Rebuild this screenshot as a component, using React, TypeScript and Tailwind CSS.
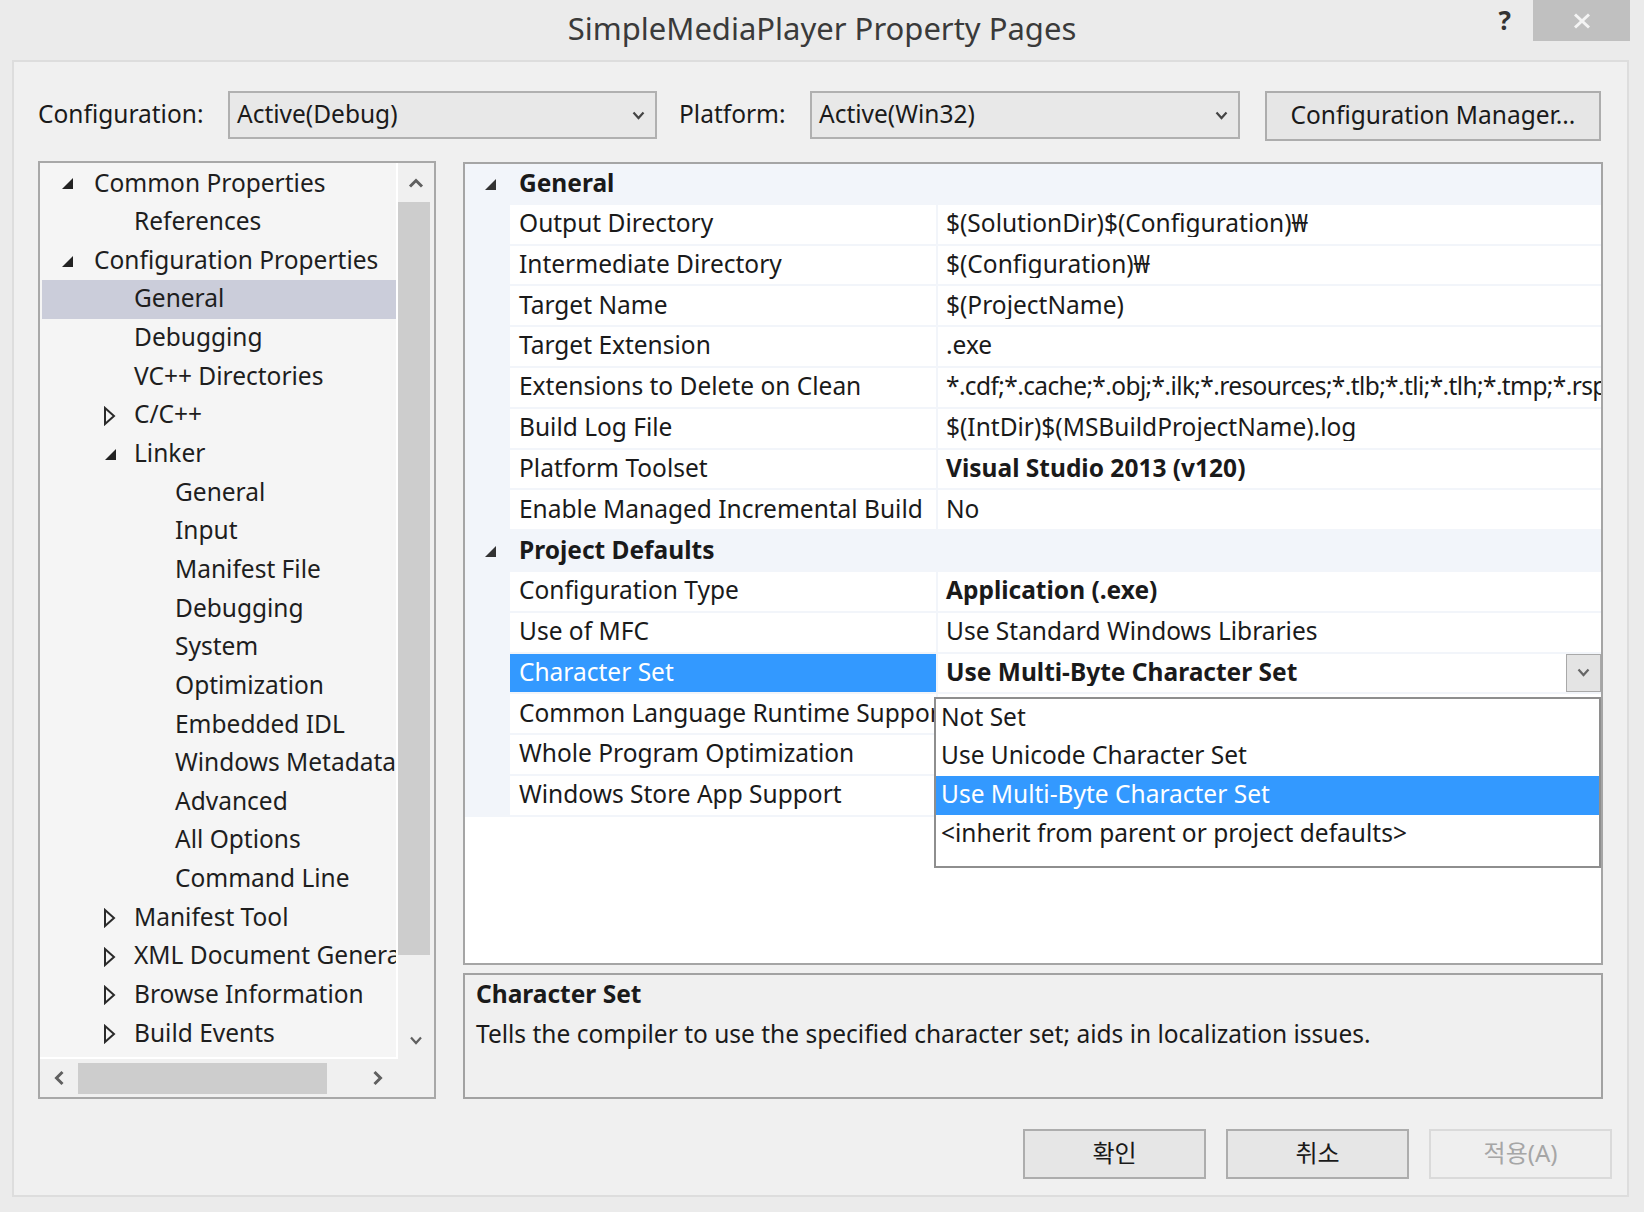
import React from "react";

const F = "font-['Noto_Sans','Noto_Sans_CJK_KR',sans-serif]";

function ExpTri({ c = "#222" }: { c?: string }) {
  return (
    <svg width="14" height="13" viewBox="0 0 14 13">
      <polygon points="13,1 13,12 2,12" fill={c} />
    </svg>
  );
}
function ColTri() {
  return (
    <svg width="13" height="20" viewBox="0 0 13 20">
      <polygon points="2,2 11,10 2,18" fill="none" stroke="#2a2a2a" strokeWidth="2" strokeLinejoin="miter" />
    </svg>
  );
}
function ChevDown({ c = "#555", w = 13 }: { c?: string; w?: number }) {
  return (
    <svg width={w} height="9" viewBox="0 0 13 9">
      <polyline points="1.5,1.5 6.5,7 11.5,1.5" fill="none" stroke={c} strokeWidth="2.2" />
    </svg>
  );
}
function ChevUp() {
  return (
    <svg width="16" height="10" viewBox="0 0 16 10">
      <polyline points="2,8.5 8,2.5 14,8.5" fill="none" stroke="#606060" strokeWidth="3" />
    </svg>
  );
}
function ChevLeft() {
  return (
    <svg width="10" height="16" viewBox="0 0 10 16">
      <polyline points="8.5,2 2.5,8 8.5,14" fill="none" stroke="#606060" strokeWidth="3" />
    </svg>
  );
}
function ChevRight() {
  return (
    <svg width="10" height="16" viewBox="0 0 10 16">
      <polyline points="1.5,2 7.5,8 1.5,14" fill="none" stroke="#606060" strokeWidth="3" />
    </svg>
  );
}

type TreeItem = { t: string; l: 0 | 1 | 2; tri?: "e" | "c"; sel?: boolean };
const tree: TreeItem[] = [
  { t: "Common Properties", l: 0, tri: "e" },
  { t: "References", l: 1 },
  { t: "Configuration Properties", l: 0, tri: "e" },
  { t: "General", l: 1, sel: true },
  { t: "Debugging", l: 1 },
  { t: "VC++ Directories", l: 1 },
  { t: "C/C++", l: 1, tri: "c" },
  { t: "Linker", l: 1, tri: "e" },
  { t: "General", l: 2 },
  { t: "Input", l: 2 },
  { t: "Manifest File", l: 2 },
  { t: "Debugging", l: 2 },
  { t: "System", l: 2 },
  { t: "Optimization", l: 2 },
  { t: "Embedded IDL", l: 2 },
  { t: "Windows Metadata", l: 2 },
  { t: "Advanced", l: 2 },
  { t: "All Options", l: 2 },
  { t: "Command Line", l: 2 },
  { t: "Manifest Tool", l: 1, tri: "c" },
  { t: "XML Document Generator", l: 1, tri: "c" },
  { t: "Browse Information", l: 1, tri: "c" },
  { t: "Build Events", l: 1, tri: "c" },
];

function TreeRow({ it }: { it: TreeItem }) {
  const lead =
    it.l === 0 ? "w-[52px] pl-[18px]" : it.l === 1 ? "w-[92px] pl-[61px]" : "w-[133px] pl-[62px]";
  return (
    <div
      className={`h-[38.65px] flex items-center whitespace-nowrap ${
        it.sel ? "bg-[#cbcdda]" : ""
      }`}
    >
      <div className={`${lead} shrink-0 flex items-center`}>
        {it.tri === "e" ? <ExpTri /> : it.tri === "c" ? <ColTri /> : null}
      </div>
      <span className="text-[24.5px] leading-none text-[#1e1e1e] pb-[2px]">{it.t}</span>
    </div>
  );
}

type Row =
  | { h: string }
  | { n: string; v: string; b?: boolean; sel?: boolean; tight?: boolean };

const rows: Row[] = [
  { h: "General" },
  { n: "Output Directory", v: "$(SolutionDir)$(Configuration)\u20A9" },
  { n: "Intermediate Directory", v: "$(Configuration)\u20A9" },
  { n: "Target Name", v: "$(ProjectName)" },
  { n: "Target Extension", v: ".exe" },
  {
    n: "Extensions to Delete on Clean",
    v: "*.cdf;*.cache;*.obj;*.ilk;*.resources;*.tlb;*.tli;*.tlh;*.tmp;*.rsp;*.pgc;*.pgd;*.meta;*.tlog;*.manifest;*.res;*.pch;*.exp",
    tight: true,
  },
  { n: "Build Log File", v: "$(IntDir)$(MSBuildProjectName).log" },
  { n: "Platform Toolset", v: "Visual Studio 2013 (v120)", b: true },
  { n: "Enable Managed Incremental Build", v: "No" },
  { h: "Project Defaults" },
  { n: "Configuration Type", v: "Application (.exe)", b: true },
  { n: "Use of MFC", v: "Use Standard Windows Libraries" },
  { n: "Character Set", v: "Use Multi-Byte Character Set", b: true, sel: true },
  { n: "Common Language Runtime Support", v: "" },
  { n: "Whole Program Optimization", v: "" },
  { n: "Windows Store App Support", v: "" },
];

function Dropdown() {
  const items = [
    "Not Set",
    "Use Unicode Character Set",
    "Use Multi-Byte Character Set",
    "<inherit from parent or project defaults>",
  ];
  return (
    <div className="absolute left-[469px] top-[43px] w-[667px] h-[171px] z-10 bg-white border-2 border-[#8e8e8e] flex flex-col">
      {items.map((t, i) => (
        <div
          key={i}
          className={`h-[38.7px] flex items-center pl-[5px] text-[24.5px] leading-none whitespace-nowrap ${
            i === 2 ? "bg-[#3399ff] text-white" : "text-[#1a1a1a]"
          }`}
        >
          <span className="pb-[2px]">{t}</span>
        </div>
      ))}
    </div>
  );
}

function GridRow({ r }: { r: Row }) {
  if ("h" in r) {
    return (
      <div className="h-[40.8px] bg-[#f2f5fa] flex items-center">
        <div className="w-[54px] pl-[18px] shrink-0 flex items-center">
          <ExpTri c="#333" />
        </div>
        <span className="text-[24.5px] leading-none font-bold text-[#1a1a1a] pb-[2px]">{r.h}</span>
      </div>
    );
  }
  return (
    <div className="h-[40.8px] bg-[#f2f5fa] flex pb-[2px] relative">
      <div className="w-[45px] shrink-0" />
      <div
        className={`w-[426px] shrink-0 flex items-center pl-[9px] overflow-hidden whitespace-nowrap ${
          r.sel ? "bg-[#3399ff] text-white" : "bg-white text-[#1a1a1a]"
        }`}
      >
        <span className="text-[24.5px] leading-none pb-[2px]">{r.n}</span>
      </div>
      <div className="w-[2px] shrink-0" />
      <div className="flex-1 min-w-0 bg-white flex items-center overflow-hidden whitespace-nowrap">
        <span
          className={`flex-1 min-w-0 pl-[8px] text-[24.5px] leading-none text-[#1a1a1a] pb-[2px] overflow-hidden ${
            r.b ? "font-bold" : ""
          } ${r.tight ? "tracking-[-0.6px]" : ""}`}
        >
          {r.v}
        </span>
        {r.sel && (
          <div className="w-[35px] h-full shrink-0 border border-[#a9a9a9] bg-[#e4e4e4] flex items-center justify-center">
            <ChevDown c="#666" w={13} />
          </div>
        )}
      </div>
      {r.sel && <Dropdown />}
    </div>
  );
}

function Combo({ text, w }: { text: string; w: string }) {
  return (
    <div
      className={`${w} h-[48px] shrink-0 border-2 border-[#b0b0b0] bg-[#e8e8e8] flex items-center pl-[7px] pr-[10px]`}
    >
      <span className="flex-1 text-[24.5px] leading-none text-[#1a1a1a] pb-[2px]">{text}</span>
      <ChevDown c="#444" w={13} />
    </div>
  );
}

function Btn({ text, disabled }: { text: string; disabled?: boolean }) {
  return (
    <div
      className={`w-[183px] h-[50px] flex items-center justify-center border-2 text-[24px] leading-none ${
        disabled
          ? "border-[#dadada] bg-[#efefef] text-[#a6a6a6]"
          : "border-[#adadad] bg-[#e6e6e6] text-[#1a1a1a]"
      }`}
    >
      <span className="pb-[2px]">{text}</span>
    </div>
  );
}

export default function App() {
  return (
    <div className={`${F} w-[1644px] h-[1212px] bg-[#ebebeb] flex flex-col overflow-hidden`}>
      {/* title bar */}
      <div className="h-[60px] shrink-0 grid grid-cols-[1fr_auto_1fr]">
        <div />
        <div className="flex items-start pt-[13px] text-[31px] leading-none text-[#3a3a3a]">
          SimpleMediaPlayer Property Pages
        </div>
        <div className="flex items-start justify-end pr-[14px]">
          <div className="h-[40px] flex items-center pr-[22px] text-[26px] font-bold text-[#333] leading-none">
            ?
          </div>
          <div className="w-[97px] h-[41px] bg-[#c0c0c0] flex items-center justify-center">
            <svg width="18" height="16" viewBox="0 0 18 16">
              <line x1="2" y1="1.5" x2="16" y2="14.5" stroke="#f4f4f4" strokeWidth="3" />
              <line x1="16" y1="1.5" x2="2" y2="14.5" stroke="#f4f4f4" strokeWidth="3" />
            </svg>
          </div>
        </div>
      </div>

      {/* panel */}
      <div className="ml-[12px] w-[1617px] h-[1137px] shrink-0 border-2 border-[#dddddd] bg-[#f0f0f0] flex flex-col pt-[29px] pl-[24px] pr-[24px]">
        {/* top row */}
        <div className="h-[50px] flex items-start">
          <div className="w-[190px] h-[48px] shrink-0 flex items-center text-[24.5px] leading-none text-[#1a1a1a]">
            <span className="pb-[2px]">Configuration:</span>
          </div>
          <Combo text="Active(Debug)" w="w-[429px]" />
          <div className="w-[153px] h-[48px] shrink-0 flex items-center pl-[22px] text-[24.5px] leading-none text-[#1a1a1a]">
            <span className="pb-[2px]">Platform:</span>
          </div>
          <Combo text="Active(Win32)" w="w-[430px]" />
          <div className="ml-[25px] w-[336px] h-[50px] shrink-0 border-2 border-[#adadad] bg-[#e6e6e6] flex items-center justify-center text-[24.5px] leading-none text-[#1a1a1a]">
            <span className="pb-[2px]">Configuration Manager...</span>
          </div>
        </div>

        {/* main */}
        <div className="mt-[20px] flex gap-[27px]">
          {/* tree */}
          <div className="w-[398px] h-[938px] shrink-0 border-2 border-[#a8a8a8] bg-[#f0f0f0] flex flex-col">
            <div className="flex-1 min-h-0 flex">
              <div className="flex-1 min-w-0 bg-[#f5f5f5] border-r-2 border-b-2 border-white overflow-hidden pt-[1.5px] pl-[2px]">
                {tree.map((it, i) => (
                  <TreeRow key={i} it={it} />
                ))}
              </div>
              <div className="w-[36px] shrink-0 flex flex-col">
                <div className="h-[39px] flex items-center justify-center">
                  <ChevUp />
                </div>
                <div className="h-[753px] w-[32px] bg-[#cdcdcd]" />
                <div className="flex-1" />
                <div className="h-[38px] flex items-center justify-center">
                  <ChevDown c="#606060" w={16} />
                </div>
              </div>
            </div>
            <div className="h-[38px] shrink-0 flex items-center">
              <div className="w-[38px] h-full flex items-center justify-center">
                <ChevLeft />
              </div>
              <div className="w-[249px] h-[31px] bg-[#cdcdcd]" />
              <div className="flex-1" />
              <div className="w-[38px] h-full flex items-center justify-center">
                <ChevRight />
              </div>
              <div className="w-[37px]" />
            </div>
          </div>

          {/* right column */}
          <div className="flex-1 min-w-0 flex flex-col">
            <div className="mt-[1px] h-[803px] border-2 border-[#a5a5a5] bg-white flex flex-col overflow-visible">
              {rows.map((r, i) => (
                <GridRow key={i} r={r} />
              ))}
            </div>
            <div className="mt-[8px] h-[126px] border-2 border-[#a2a2a2] bg-[#f0f0f0] pl-[11px] pt-[5px] text-[#1a1a1a]">
              <div className="h-[30px] flex items-center text-[24.5px] leading-none font-bold">
                <span className="pb-[2px]">Character Set</span>
              </div>
              <div className="h-[38px] mt-[6px] flex items-center text-[24.5px] leading-none">
                <span className="pb-[2px]">
                  Tells the compiler to use the specified character set; aids in localization issues.
                </span>
              </div>
            </div>
          </div>
        </div>

        {/* buttons */}
        <div className="mt-[30px] flex justify-end gap-[20px] -mr-[9px]">
          <Btn text="확인" />
          <Btn text="취소" />
          <Btn text="적용(A)" disabled />
        </div>
      </div>
    </div>
  );
}
